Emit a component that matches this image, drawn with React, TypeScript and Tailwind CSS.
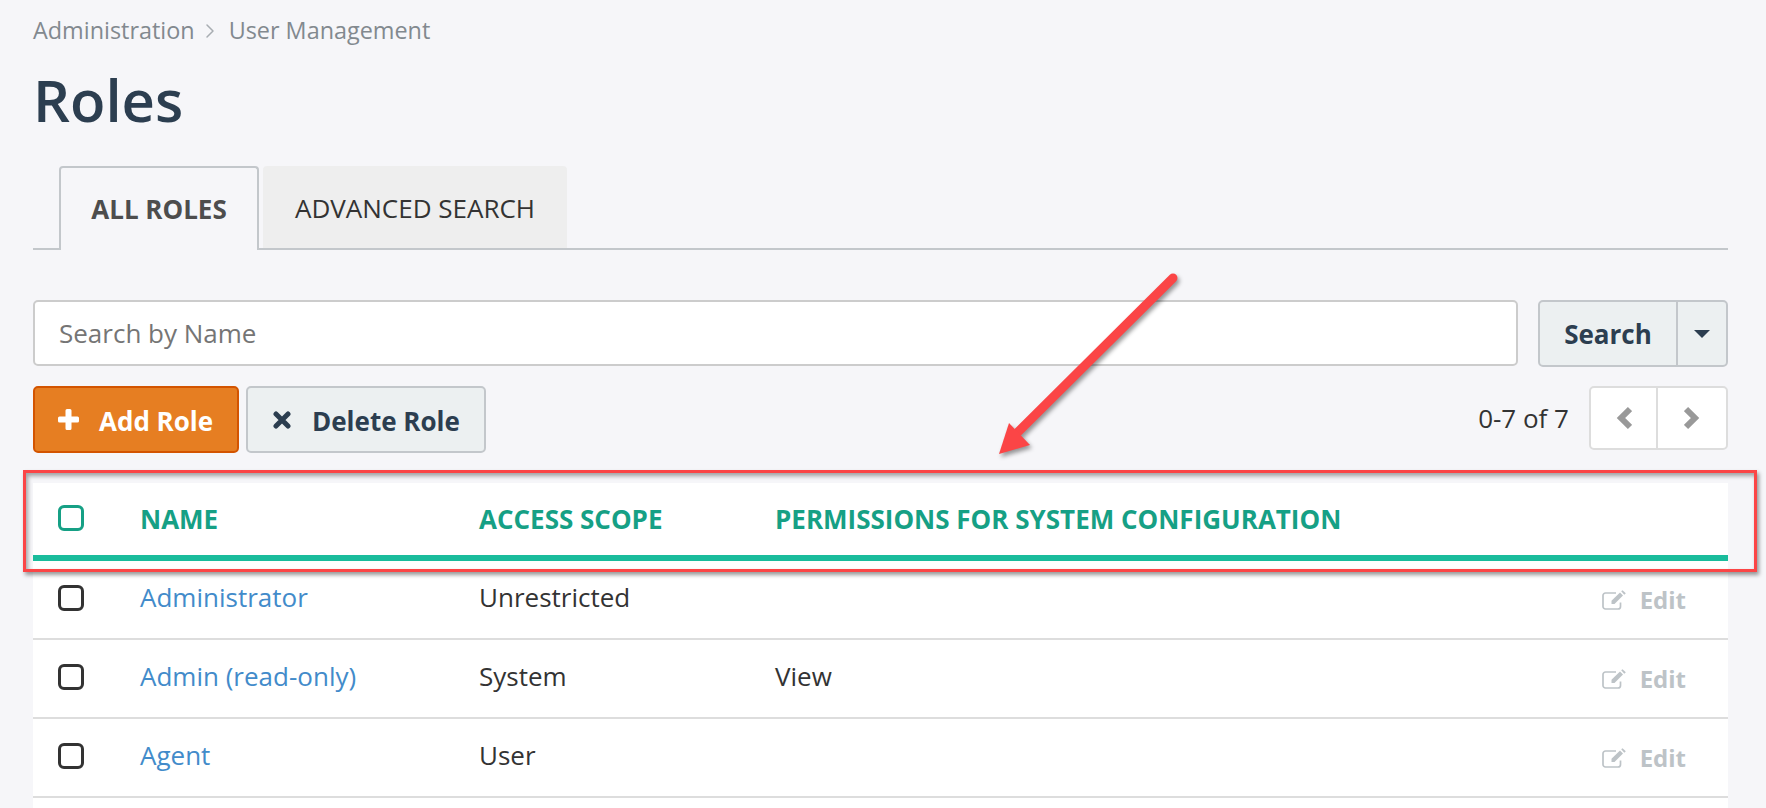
import { ChevronRight } from "lucide-react";

const rows = [
  { name: "Administrator", scope: "Unrestricted", perm: "" },
  { name: "Admin (read-only)", scope: "System", perm: "View" },
  { name: "Agent", scope: "User", perm: "" },
];

const EditIcon = () => (
  <svg width="25" height="20" viewBox="0 0 25 20" fill="none">
    <path d="M18.500 12.500v4a2.500 2.500 0 0 1-2.500 2.500H3.500A2.500 2.500 0 0 1 1 16.500V5.500A2.500 2.500 0 0 1 3.500 3h10.500" stroke="currentColor" strokeWidth="1.700" />
    <path d="M9.500 10.800 18 2.500l3 3-8.500 8.500H9.500z" fill="currentColor" />
    <path d="M19.200 1.300 20.500 0.200l3.300 3.100-1.500 1.400z" fill="currentColor" />
  </svg>
);

const App = () => {
  return (
    <div className="relative h-[808px] overflow-hidden bg-[#f6f6f9] pl-[33px] pr-[38px] font-['Open_Sans',sans-serif]">
      {/* Breadcrumb */}
      <div className="flex h-[62px] items-center text-[23.4px] text-[#82898f]">
        <span>Administration</span>
        <ChevronRight className="mr-[7px] ml-[3px] size-[24px] text-[#a8adb2]" strokeWidth={1.5} />
        <span>User Management</span>
      </div>

      <h1 className="mt-[4px] h-[75px] text-[58px] leading-[67px] font-semibold text-[#2c3e50]">Roles</h1>

      {/* Tabs */}
      <div className="mt-[25px] flex h-[84px] gap-[4px] border-b-2 border-[#c3c7cb] pl-[26px]">
        <div className="flex h-[84px] w-[200px] items-center justify-center rounded-t border-2 border-b-0 border-[#c3c7cb] bg-[#f6f6f9] text-[26px] font-bold text-[#4d4d4d]">
          ALL ROLES
        </div>
        <div className="flex h-[82px] w-[304px] items-center justify-center rounded-t bg-[#eeeeee] pt-[2px] text-[26px] text-[#333333]">
          ADVANCED SEARCH
        </div>
      </div>

      {/* Search */}
      <div className="mt-[50px] flex h-[67px] gap-[20px]">
        <div className="flex h-[66px] flex-1 items-center rounded-[5px] border-2 border-[#cccccc] bg-white pl-[24px] text-[26px] text-[#757575]">
          Search by Name
        </div>
        <div className="flex w-[190px] rounded-[5px] border-2 border-[#c3c7cb] bg-[#ecf0f1] text-[#2c3e50]">
          <div className="flex w-[138px] items-center justify-center border-r-2 border-[#c3c7cb] pt-[2px] text-[26px] font-bold">
            Search
          </div>
          <div className="flex flex-1 items-center justify-center pt-[1px]">
            <span className="size-0 border-x-[8px] border-t-[8px] border-x-transparent border-t-[#2c3e50]" />
          </div>
        </div>
      </div>

      {/* Actions */}
      <div className="mt-[19px] flex h-[67px] items-start">
        <button className="flex h-[67px] w-[206px] items-center rounded-[5px] border-2 border-[#d35400] bg-[#e67e22] pl-[23px] text-[26px] font-bold text-white">
          <svg width="21" height="21" viewBox="0 0 21 21" fill="currentColor">
            <path d="M7.500 1.500a1.500 1.500 0 0 1 1.500-1.500h3a1.500 1.500 0 0 1 1.500 1.500v6h6a1.500 1.500 0 0 1 1.500 1.500v3a1.500 1.500 0 0 1-1.500 1.500h-6v6a1.500 1.500 0 0 1-1.500 1.500h-3a1.500 1.500 0 0 1-1.500-1.500v-6h-6a1.500 1.500 0 0 1-1.500-1.500v-3a1.500 1.500 0 0 1 1.500-1.500h6z" />
          </svg>
          <span className="ml-[20px] pt-[3px]">Add Role</span>
        </button>
        <button className="ml-[7px] flex h-[67px] w-[240px] items-center rounded-[5px] border-2 border-[#c3c7cb] bg-[#ecf0f1] pl-[25px] text-[26px] font-bold text-[#2c3e50]">
          <svg width="18" height="18" viewBox="0 0 18 18" stroke="currentColor" strokeWidth="5" strokeLinecap="round">
            <path d="M3 3l12 12M15 3L3 15" />
          </svg>
          <span className="ml-[21px] pt-[3px]">Delete Role</span>
        </button>
        <div className="ml-auto flex h-[64px] items-center text-[26px] text-[#333333]">0-7 of 7</div>
        <div className="ml-[20px] flex h-[64px] w-[139px] rounded-[5px] border-2 border-[#dddddd] bg-white text-[#999999]">
          <div className="flex w-[67px] items-center justify-center border-r-2 border-[#dddddd]">
            <svg width="16" height="24" viewBox="0 0 16 24" fill="none" stroke="currentColor" strokeWidth="6">
              <path d="M14 3 5 12l9 9" />
            </svg>
          </div>
          <div className="flex flex-1 items-center justify-center">
            <svg width="16" height="24" viewBox="0 0 16 24" fill="none" stroke="currentColor" strokeWidth="6">
              <path d="M2 3l9 9-9 9" />
            </svg>
          </div>
        </div>
      </div>

      {/* Table */}
      <div className="mt-[30px] bg-white">
        <div className="grid h-[78px] grid-cols-[82px_339px_296px_1fr] items-center border-b-[6px] border-[#1abc9c] pl-[25px] text-[26px] font-bold text-[#16a085]">
          <span className="h-[26px] w-[26px] -translate-y-[1px] rounded-[6px] border-[3px] border-[#16a085]" />
          <span>NAME</span>
          <span>ACCESS SCOPE</span>
          <span>PERMISSIONS FOR SYSTEM CONFIGURATION</span>
        </div>
        {rows.map((row) => (
          <div
            key={row.name}
            className="grid h-[79px] grid-cols-[82px_339px_296px_1fr_auto] items-center border-b-2 border-[#dddddd] pr-[42px] pl-[25px] text-[26px] text-[#333333]"
          >
            <span className="h-[26px] w-[26px] -translate-y-[2px] rounded-[6px] border-[3px] border-[#333333]" />
            <a className="-translate-y-[2px] text-[#428bca]">{row.name}</a>
            <span className="-translate-y-[2px]">{row.scope}</span>
            <span className="-translate-y-[2px]">{row.perm}</span>
            <span className="flex items-center gap-[13px] text-[24px] font-bold text-[#bdc3c7]">
              <EditIcon />
              Edit
            </span>
          </div>
        ))}
        <div className="h-[20px]" />
      </div>

      {/* Annotation */}
      <div className="pointer-events-none absolute top-[470px] left-[23px] h-[102px] w-[1734px] border-[3px] border-[#fb4546] shadow-[2px_3px_4px_rgba(0,0,0,0.4),inset_2px_3px_4px_rgba(0,0,0,0.35)]" />
      <svg
        className="pointer-events-none absolute top-0 left-0 drop-shadow-[2px_3px_2px_rgba(0,0,0,0.4)]"
        width="1766"
        height="808"
        viewBox="0 0 1766 808"
      >
        <path d="M1173 278 L1018 432" stroke="#fb4546" strokeWidth="9" strokeLinecap="round" fill="none" />
        <polygon points="999,454 1009,423 1030,445" fill="#fb4546" />
      </svg>
    </div>
  );
};

export default App;
